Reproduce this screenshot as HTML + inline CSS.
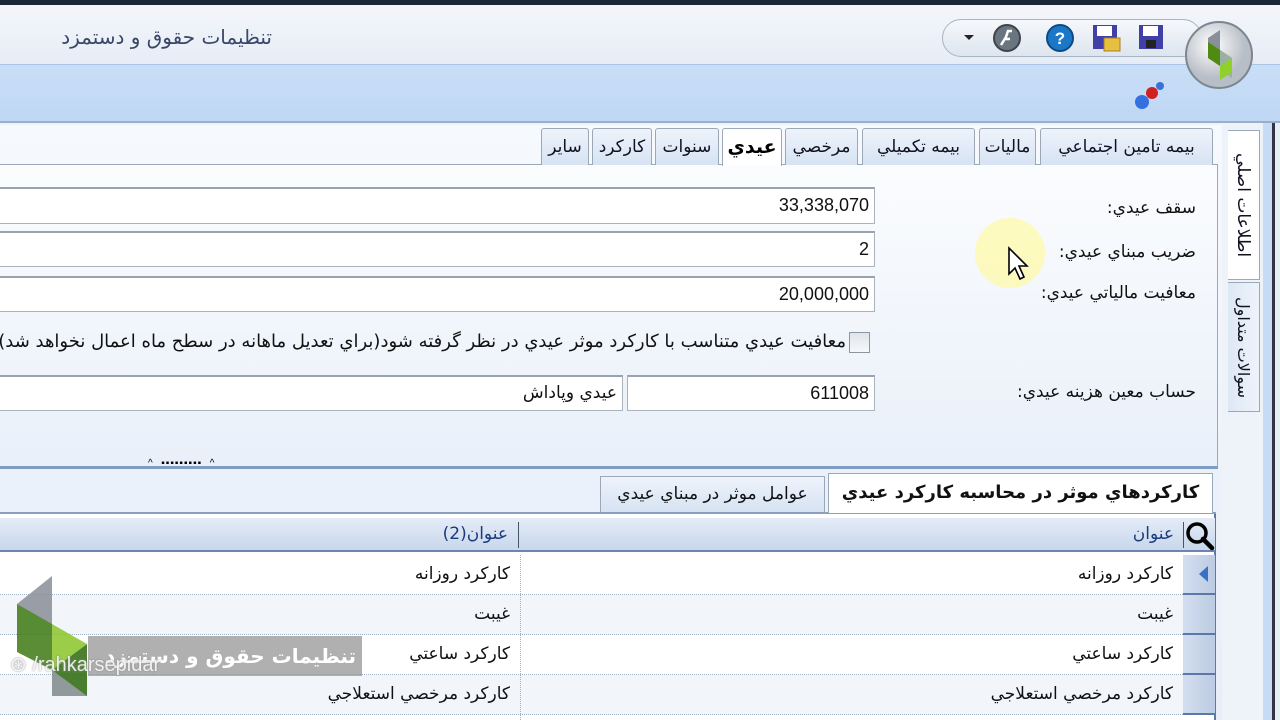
<!DOCTYPE html>
<html><head><meta charset="utf-8">
<style>
*{margin:0;padding:0;box-sizing:border-box}
body{width:1280px;height:720px;overflow:hidden;position:relative;background:#eef3fa;font-family:"DejaVu Sans","Liberation Sans",sans-serif;font-size:17px;color:#111}
.a{position:absolute}
.r{direction:rtl;white-space:nowrap}
.tab{position:absolute;top:128px;height:37px;border:1px solid #9aa8b8;border-bottom:none;border-radius:3px 3px 0 0;background:linear-gradient(#eef3fb,#d6e3f3);font-size:17px;line-height:36px;text-align:center;direction:rtl;white-space:nowrap;color:#112;overflow:hidden}
.inp{position:absolute;background:#fff;border:1px solid #aab3bd;border-top:2px solid #9aa3ad;direction:rtl;padding-right:5px;font-family:"Liberation Sans",sans-serif;font-size:18px;line-height:32px}
.lbl{position:absolute;right:84px;direction:rtl;white-space:nowrap;font-size:17px}
.row{position:absolute;left:0;width:1183px;height:40px;border-bottom:1px dotted #9fb0c4}
.row .c1,.row .c2{position:absolute;top:0;height:39px;line-height:39px;direction:rtl;white-space:nowrap;font-size:17px}
.rh{position:absolute;left:1183px;width:32px;height:40px;background:linear-gradient(90deg,#d3def0,#bccbe2);border-bottom:2px solid #5c78a8}
</style></head><body>
<div class="a" style="left:0;top:0;width:1280px;height:5px;background:#1b2838"></div>
<div class="a" style="left:0;top:5px;width:1280px;height:60px;background:linear-gradient(#f4f6fb,#e6ecf6)"></div>
<div class="a" style="left:0;top:64px;width:1280px;height:1px;background:#aac4e6"></div>
<div class="a" style="left:0;top:65px;width:1280px;height:57px;background:linear-gradient(#c9def7,#bfd7f4)"></div>
<div class="a" style="left:0;top:121px;width:1280px;height:2px;background:#98aec9"></div>
<div class="a r" style="left:40px;top:25px;width:232px;font-size:20px;color:#3a4868;text-align:right">تنظيمات حقوق و دستمزد</div>
<div class="a" style="left:942px;top:19px;width:260px;height:38px;border:1px solid #a8b4c4;border-radius:19px;background:linear-gradient(#f6f8fb,#dde5ef)"></div>
<div class="a" style="left:964px;top:35px;width:0;height:0;border-left:5px solid transparent;border-right:5px solid transparent;border-top:5px solid #223"></div>
<svg class="a" style="left:992px;top:23px" width="30" height="30"><circle cx="15" cy="15" r="13" fill="#6b7580" stroke="#3c444c" stroke-width="2"/><path d="M9 22 L14 14 L16 8 L20 8 M12 16 L18 16" stroke="#fff" stroke-width="2.5" fill="none"/></svg>
<svg class="a" style="left:1045px;top:23px" width="30" height="30"><circle cx="15" cy="15" r="13" fill="#1b78c8" stroke="#0d4a86" stroke-width="2"/><text x="15" y="21" font-family="Liberation Sans" font-weight="bold" font-size="17" fill="#fff" text-anchor="middle">?</text></svg>
<svg class="a" style="left:1092px;top:24px" width="30" height="30"><rect x="1" y="1" width="24" height="24" fill="#4040a8"/><rect x="5" y="2" width="15" height="10" fill="#fff"/><rect x="12" y="14" width="16" height="13" fill="#e8c040" stroke="#a88020"/></svg>
<svg class="a" style="left:1138px;top:24px" width="28" height="28"><rect x="1" y="1" width="24" height="24" fill="#4040a8"/><rect x="5" y="2" width="15" height="10" fill="#fff"/><rect x="8" y="16" width="10" height="8" fill="#222"/></svg>
<svg class="a" style="left:1184px;top:20px" width="72" height="72"><defs><radialGradient id="g" cx="40%" cy="35%"><stop offset="0" stop-color="#fff"/><stop offset="1" stop-color="#b8bec6"/></radialGradient></defs><circle cx="35" cy="35" r="33" fill="url(#g)" stroke="#7c8590" stroke-width="2"/><polygon points="24,18 36,10 36,30 24,38" fill="#8a9099"/><polygon points="24,38 36,30 48,38 36,46" fill="#7cbf1e"/><polygon points="24,22 36,30 36,46 24,38" fill="#4f8a12"/><polygon points="36,30 48,38 48,58 36,50" fill="#9ab0a0"/><polygon points="36,46 48,38 48,52 36,60" fill="#8fd12a"/></svg>
<svg class="a" style="left:1132px;top:78px" width="40" height="34"><circle cx="28" cy="8" r="4" fill="#3a70d8"/><circle cx="20" cy="15" r="6" fill="#d02020"/><circle cx="10" cy="24" r="7" fill="#3570e0"/></svg>

<div class="a" style="left:1220px;top:123px;width:44px;height:597px;background:#eef3fa"></div>
<div class="a" style="left:1263px;top:123px;width:10px;height:597px;background:#c6dcf5"></div>
<div class="a" style="left:1272px;top:123px;width:3px;height:597px;background:#334"></div>
<div class="a" style="left:1275px;top:123px;width:5px;height:597px;background:#e8eef6"></div>
<div class="a" style="left:1228px;top:130px;width:32px;height:150px;background:#fff;border:1px solid #9aa8b8;border-left:none"></div>
<div class="a" style="left:1228px;top:134px;width:30px;height:142px;writing-mode:vertical-rl;direction:rtl;font-size:17px;line-height:30px;text-align:center;white-space:nowrap;color:#112">اطلاعات اصلي</div>
<div class="a" style="left:1228px;top:282px;width:32px;height:130px;background:linear-gradient(90deg,#dde8f5,#eef3fa);border:1px solid #9aa8b8;border-left:none"></div>
<div class="a" style="left:1228px;top:284px;width:30px;height:126px;writing-mode:vertical-rl;direction:rtl;font-size:16px;line-height:30px;text-align:center;white-space:nowrap;color:#112">سوالات متداول</div>

<div class="a" style="left:0;top:125px;width:1222px;height:595px;background:linear-gradient(#f6f9fd,#e7eef8)"></div>
<div class="a" style="left:0;top:164px;width:1218px;height:302px;background:linear-gradient(#fbfcfe,#e9f0f9);border-top:1px solid #9aa8b8;border-right:1px solid #9aa8b8"></div>
<div class="tab" style="left:1040px;width:173px">بيمه تامين اجتماعي</div>
<div class="tab" style="left:979px;width:57px">ماليات</div>
<div class="tab" style="left:862px;width:113px">بيمه تكميلي</div>
<div class="tab" style="left:785px;width:73px">مرخصي</div>
<div class="tab" style="left:722px;width:60px;background:#fff;font-weight:bold;font-size:19px;height:38px;color:#000">عيدي</div>
<div class="tab" style="left:655px;width:64px">سنوات</div>
<div class="tab" style="left:592px;width:60px">كاركرد</div>
<div class="tab" style="left:541px;width:48px">ساير</div>

<div class="a" style="left:975px;top:218px;width:70px;height:70px;border-radius:50%;background:rgba(255,250,170,.75)"></div>
<svg class="a" style="left:1007px;top:246px" width="24" height="36"><path d="M2 2 L2 28 L8 22 L13 33 L17 31 L12 20 L20 20 Z" fill="#fff" stroke="#000" stroke-width="1.6"/></svg>

<div class="lbl" style="top:198px">سقف عيدي:</div>
<div class="lbl" style="top:242px">ضريب مبناي عيدي:</div>
<div class="lbl" style="top:283px">معافيت مالياتي عيدي:</div>
<div class="lbl" style="top:382px">حساب معين هزينه عيدي:</div>
<div class="inp" style="left:-2px;top:187px;width:877px;height:37px">33,338,070</div>
<div class="inp" style="left:-2px;top:231px;width:877px;height:36px">2</div>
<div class="inp" style="left:-2px;top:276px;width:877px;height:36px">20,000,000</div>
<div class="a" style="left:849px;top:332px;width:21px;height:21px;border:1px solid #8c96a0;background:linear-gradient(#dfe4ea,#f6f8fa)"></div>
<div class="a r" style="right:434px;top:331px;font-size:18px">معافيت عيدي متناسب با كاركرد موثر عيدي در نظر گرفته شود(براي تعديل ماهانه در سطح ماه اعمال نخواهد شد)</div>
<div class="inp" style="left:627px;top:375px;width:248px;height:36px">611008</div>
<div class="inp" style="left:-2px;top:375px;width:625px;height:36px;font-family:'DejaVu Sans',sans-serif;font-size:17px">عيدي وپاداش</div>

<div class="a" style="left:0;top:466px;width:1218px;height:3px;background:#7f9cc2"></div>
<div class="a" style="left:148px;top:459px;width:120px;height:10px;font-size:10px;line-height:10px;color:#000;font-family:'Liberation Sans';letter-spacing:1px">^ &nbsp;▪▪▪▪▪▪▪▪▪ &nbsp;^</div>

<div class="a" style="left:0;top:469px;width:1218px;height:44px;background:#eaf1fa"></div>
<div class="a" style="left:0;top:512px;width:1216px;height:2px;background:#8aa0bc"></div>
<div class="a r" style="left:828px;top:473px;width:385px;height:40px;background:#fff;border:1px solid #9aa8b8;border-bottom:none;font-weight:bold;font-size:18px;line-height:38px;text-align:center">كاركردهاي موثر در محاسبه كاركرد عيدي</div>
<div class="a r" style="left:600px;top:476px;width:225px;height:36px;background:linear-gradient(#eef3fb,#d6e3f3);border:1px solid #9aa8b8;border-bottom:none;font-size:17px;line-height:34px;text-align:center;overflow:hidden">عوامل موثر در مبناي عيدي</div>

<div class="a" style="left:0;top:514px;width:1216px;height:206px;background:#fff;border-right:2px solid #5c78a8"></div>
<div class="a" style="left:0;top:518px;width:1215px;height:34px;background:linear-gradient(#e4ecf7,#c8d7eb);border-bottom:2px solid #6b86b2"></div>
<div class="a" style="left:1183px;top:522px;width:1px;height:26px;background:#456"></div>
<div class="a" style="left:518px;top:522px;width:1px;height:26px;background:#456"></div>
<svg class="a" style="left:1184px;top:520px" width="32" height="32"><circle cx="13" cy="13" r="9" fill="none" stroke="#000" stroke-width="3.5"/><line x1="19" y1="19" x2="28" y2="28" stroke="#000" stroke-width="4.5" stroke-linecap="round"/></svg>
<div class="a r" style="right:106px;top:524px;font-size:17px;color:#1a3a80">عنوان</div>
<div class="a r" style="right:772px;top:524px;font-size:17px;color:#1a3a80">عنوان(2)</div>

<div class="row" style="top:555px"><div class="c1" style="right:10px">كاركرد روزانه</div><div class="c2" style="right:673px">كاركرد روزانه</div></div>
<div class="row" style="top:595px;background:#f2f6fb"><div class="c1" style="right:10px">غيبت</div><div class="c2" style="right:673px">غيبت</div></div>
<div class="row" style="top:635px"><div class="c1" style="right:10px">كاركرد ساعتي</div><div class="c2" style="right:673px">كاركرد ساعتي</div></div>
<div class="row" style="top:675px;background:#f2f6fb"><div class="c1" style="right:10px">كاركرد مرخصي استعلاجي</div><div class="c2" style="right:673px">كاركرد مرخصي استعلاجي</div></div>
<div class="a" style="left:520px;top:555px;width:0;height:165px;border-left:1px dotted #9fb0c4"></div>
<div class="rh" style="top:555px"></div>
<div class="rh" style="top:595px"></div>
<div class="rh" style="top:635px"></div>
<div class="rh" style="top:675px"></div>
<div class="a" style="left:1199px;top:566px;width:0;height:0;border-top:8px solid transparent;border-bottom:8px solid transparent;border-right:9px solid #3a70c8"></div>

<svg class="a" style="left:14px;top:574px" width="80" height="125" opacity="0.85"><polygon points="3,30 38,2 38,50 3,78" fill="#8a8f98"/><polygon points="3,30 38,50 38,96 3,78" fill="#3e7a12"/><polygon points="38,50 73,70 38,96" fill="#8bc52a"/><polygon points="38,96 73,70 73,122 38,122" fill="#2d6a0c"/><polygon points="38,96 73,122 38,122" fill="#8a8f98" opacity=".9"/></svg>
<div class="a" style="left:88px;top:636px;width:274px;height:40px;background:rgba(150,150,150,.75)"></div>
<div class="a r" style="left:88px;top:636px;width:268px;height:40px;line-height:40px;text-align:right;color:#fff;font-weight:bold;font-size:20px">تنظيمات حقوق و دستمزد</div>
<div class="a" style="left:10px;top:652px;font-family:'Liberation Sans',sans-serif;font-size:20px;color:rgba(255,255,255,.85);text-shadow:0 0 2px #888">⊛ /rahkarsepidar</div>
</body></html>
